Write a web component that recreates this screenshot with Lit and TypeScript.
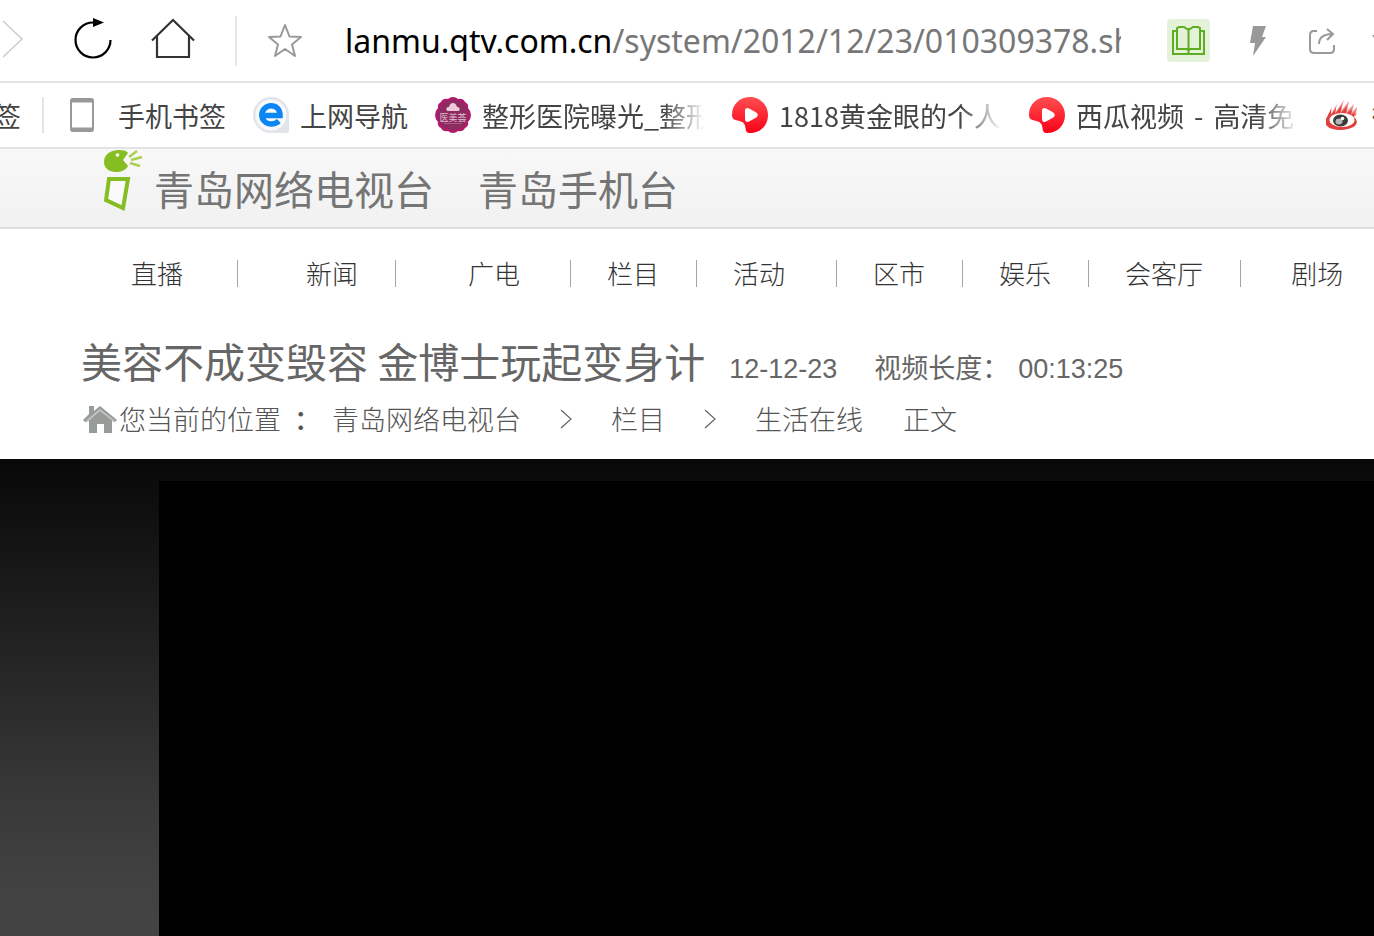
import { LitElement, html, css, svg } from "lit";
import { customElement } from "lit/decorators.js";

const melon = html`<svg class="fav" viewBox="0 0 36 36" aria-hidden="true">
  <defs><linearGradient id="m" x1="0" y1="0" x2="0" y2="1"><stop offset="0" stop-color="#ff4f50"/><stop offset="1" stop-color="#fb0018"/></linearGradient></defs>
  <path fill="url(#m)" d="M0 18C0 7 8 0 18 0s18 8 18 18-7 18-18 18c-3.500 0-4-1.500-4.500-5-.5-4-2-6-6-7C2.500 23 0 22 0 18Z"/>
  <path fill="#fff" d="M13 14c0-3 2-3.500 4.500-2.300l6 3.300c3 2 3 4 0 6l-6 3.300C15 25.500 13 25 13 22Z"/></svg>`;

const eIcon = html`<svg class="fav" viewBox="0 0 36 36" aria-hidden="true">
  <path fill="#e1e4ea" d="M18 0a18 18 0 0 1 18 18v16q0 2-2 2H18a18 18 0 0 1 0-36Z"/><circle cx="18" cy="18" r="15.500" fill="#f8f9fb"/>
  <path fill="none" stroke="#0c85f5" stroke-width="5.500" d="M9 18.500H27C27 12 23 8.800 18 8.800S8.800 13 8.800 18s4 9 9.500 9c3 0 5.500-1 7.500-3"/></svg>`;

const badge = html`<svg class="fav" viewBox="0 0 36 36" aria-hidden="true">
  <path fill="#b01a6c" d="M18 0q3 0 5 2 5-1 7 3 4 2 3 6 3 3 3 7t-3 7q1 4-3 6-2 4-7 3-2 2-5 2t-5-2q-5 1-7-3-4-2-3-6-3-3-3-7t3-7q-1-4 3-6 2-4 7-3 2-2 5-2Z"/>
  <circle cx="18" cy="18" r="15" fill="#8c2c60"/>
  <path fill="#efc9dc" d="M12 14q-2-4 2-4 1-4 4-4t4 4q4 0 2 4Z"/><path stroke="#b05a88" d="M9 26.500h18"/>
  <text x="18" y="24" text-anchor="middle" font-size="9" fill="#e3bfd0" font-family="Noto Sans CJK SC, sans-serif">医美荟</text></svg>`;

const weibo = html`<svg class="weibo" viewBox="0 0 34 30" aria-hidden="true">
  <path fill="#f0908c" d="M2 16 6 7l-1 7 6-10-2 9 9-13-3 11 8-10-2 10 7-7-2 8 5-5-1 9Z"/>
  <path fill="#e2403f" d="M1 17 5 9l0 6 5-7-1 6 7-9-2 9 7-8-1 8 6-5-1 6 4-3-1 5c5 4 3 9-3 11-7 3-19 3-24-2-3-3-2-6 0-9Z"/>
  <ellipse cx="16" cy="20" rx="12.500" ry="7" fill="#fff"/>
  <ellipse cx="14.500" cy="20.500" rx="7.500" ry="6" fill="#3a3a3a"/><ellipse cx="13" cy="21.500" rx="3.500" ry="3" fill="#b5b5b5"/><circle cx="16.500" cy="18.500" r="1.800" fill="#fff"/></svg>`;

const phone = html`<svg class="phone" viewBox="0 0 24 34" aria-hidden="true">
  <rect x="1" y="1" width="22" height="32" rx="2" fill="#fff" stroke="#999" stroke-width="2"/><path stroke="#999" stroke-width="4" d="M1 2.500h22M1 31.500h22"/></svg>`;

const bookmarks = [
  { cls: "", icon: phone, text: "手机书签" },
  { cls: "", icon: eIcon, text: "上网导航" },
  { cls: "fade", icon: badge, text: "整形医院曝光_整形" },
  { cls: "fade", icon: melon, text: "1818黄金眼的个人" },
  { cls: "fade", icon: melon, text: html`西瓜视频<span class="dash">-</span>高清免` },
  { cls: "", icon: weibo, text: "微博" },
];

const channels = [
  ["直播", "wide"], ["新闻", "tail"], ["广电", "lead"], ["栏目", ""], ["活动", "far"],
  ["区市", ""], ["娱乐", ""], ["会客厅", ""], ["剧场", "last"],
];

@customElement("app-root")
export class AppRoot extends LitElement {
  static styles = css`
    :host { display: flex; flex-direction: column; min-height: 100vh; overflow: hidden; background: #fff; font-family: "Liberation Sans", "Noto Sans CJK SC", sans-serif; color: #666; }
    * { box-sizing: border-box; }
    a { color: inherit; text-decoration: none; }
    button { border: 0; padding: 0; margin: 0; background: none; display: flex; flex: none; }
    svg { display: block; flex: none; }

    .toolbar { display: flex; align-items: center; height: 83px; border-bottom: 2px solid #e3e3e3; }
    .forward { width: 24px; }
    .forward, .reload, .home { padding-bottom: 3px; }
    .reload { margin-left: 50px; }
    .home { margin-left: 39px; }
    .rule { width: 2px; height: 50px; background: #e6e6e6; margin: 0 30px 0 40px; flex: none; }
    .address { flex: 1; min-width: 0; margin-left: 42px; font: 32px/48px "Noto Sans", "Noto Sans CJK SC", sans-serif; color: #777; white-space: nowrap; overflow: hidden; }
    .address b { font-weight: 400; color: #000; }
    .tools { display: flex; align-items: center; flex: none; margin-left: 46px; }
    .reader { background: #e5f2da; border-radius: 4px; }
    .bolt { margin-left: 39px; }
    .share { margin-left: 41px; }
    .more { margin-left: 36px; }

    .bookmarks { display: flex; align-items: center; height: 66px; border-bottom: 2px solid #e3e3e3; font: 27px/40px "Noto Sans CJK SC", sans-serif; color: #444; white-space: nowrap; overflow: hidden; }
    .cut { width: 21px; display: flex; justify-content: flex-end; flex: none; }
    .mini { width: 2px; height: 36px; background: #e3e3e3; margin: 0 26px 0 21px; flex: none; }
    .bm { display: flex; align-items: center; flex: none; margin-right: 27px; }
    .fav { width: 36px; height: 36px; margin-right: 11px; }
    .phone { width: 24px; height: 34px; margin-right: 24px; }
    .weibo { width: 34px; height: 30px; margin-right: 12px; }
    .cut, .label { padding-top: 2px; }
    .fade .label { width: 223px; -webkit-mask-image: linear-gradient(90deg, #000 182px, transparent 223px); mask-image: linear-gradient(90deg, #000 182px, transparent 223px); }
    .dash { margin: 0 10px; }

    .masthead { display: flex; align-items: flex-start; height: 80px; padding-left: 102px; border-bottom: 2px solid #dfdfdf; background: linear-gradient(#f8f8f8, #f1f1f1); font: 40px/60px "Noto Sans CJK SC", sans-serif; color: #757575; }
    .masthead a { margin-top: 9px; }
    .brand { margin-left: 10px; }
    .mobile { margin-left: 44px; }

    .channels { display: flex; align-items: center; padding-left: 131px; height: 88px; font: 300 26px/36px "Noto Sans CJK SC", sans-serif; color: #333; white-space: nowrap; }
    .channels a { flex: none; }
    .channels i { width: 1px; height: 27px; background: #a5a5a5; margin: 0 36px 0 37px; flex: none; }
    .channels .wide + i { margin: 0 68px 0 54px; }
    .channels .lead + i { margin-left: 50px; }
    .channels .tail + i { margin-right: 72px; }
    .channels .far + i { margin-left: 51px; }
    .channels i.before-last { margin-right: 50px; }

    .title { display: flex; align-items: baseline; padding-left: 81px; margin-top: 13px; white-space: nowrap; }
    h1 { margin: 0; font: 41px/60px "Noto Sans CJK SC", sans-serif; color: #666; }
    .date { margin-left: 24px; font-size: 27px; line-height: 36px; }
    .length { margin-left: 37px; font-size: 27px; line-height: 36px; }
    .time { margin-left: 9px; }
    .crumbs { display: flex; align-items: center; height: 52px; padding-left: 83px; margin-top: 3px; font: 300 27px/36px "Noto Sans CJK SC", sans-serif; color: #555; white-space: nowrap; }
    .colon { width: 51px; padding-left: 13px; font-weight: 500; }
    .chev { margin: 0 39px; }
    .here { margin-left: 40px; }

    .stage { flex: 1; display: flex; min-height: 477px; padding: 22px 0 0 159px; margin-top: 14px; background: linear-gradient(#080808, #0c0c0c 6%, #393939 72%, #424242 90%, #434343); }
    .player { flex: 1; background: #000; }
  `;

  render() {
    return html`
      <header class="toolbar">
        <button class="forward" aria-label="前进"><svg width="24" height="40" viewBox="0 0 24 40"><path d="M3 2 22 20 3 38" fill="none" stroke="#ccc" stroke-width="1.500"/></svg></button>
        <button class="reload" aria-label="刷新"><svg width="38" height="42" viewBox="0 0 38 42"><path d="M36.500 22A17.500 17.500 0 1 1 19 4.500" fill="none" stroke="#000" stroke-width="2.200"/><path d="M19 0v9l11-4.500Z"/></svg></button>
        <button class="home" aria-label="主页"><svg width="44" height="42" viewBox="0 0 44 42"><path d="M1 22.500 22 2l21 20.500M6 18v21h32V18" fill="none" stroke="#333" stroke-width="2.200"/></svg></button>
        <span class="rule"></span>
        <button aria-label="收藏"><svg width="36" height="36" viewBox="0 0 36 36"><path d="m18 2 4.500 11.500L34 14l-9 7.500L28 33l-10-7-10 7 3-11.500L2 14l11.500-.5Z" fill="none" stroke="#999" stroke-width="2" stroke-linejoin="round"/></svg></button>
        <div class="address"><b>lanmu.qtv.com.cn</b>/system/2012/12/23/010309378.sh</div>
        <div class="tools">
          <button class="reader" aria-label="阅读模式"><svg width="43" height="43" viewBox="0 0 43 43"><path d="M9 12H6v23h31V12h-3M10 9v21h10l1.500 2 1.500-2h10V9l-2-1h-5l-3 2h-3l-3-2h-5ZM21.500 10v25" fill="none" stroke="#5fae1f" stroke-width="2"/></svg></button>
          <button class="bolt" aria-label="加速"><svg width="18" height="30" viewBox="0 0 18 30"><path d="M4 0h13l-4 11h4L4 30l2-13H1Z" fill="#999"/></svg></button>
          <button class="share" aria-label="分享"><svg width="28" height="28" viewBox="0 0 28 28"><path d="M9 4H6Q2 4 2 8v14q0 4 4 4h16q4 0 4-4v-4M11 17q0-10 14-10M19 2l6 5-6 6" fill="none" stroke="#999" stroke-width="2"/></svg></button>
          <svg class="more" width="2" height="12" viewBox="0 0 2 12"><path d="M0 0h2v3Z" fill="#999"/></svg>
        </div>
      </header>
      <nav class="bookmarks">
        <span class="cut">签</span><span class="mini"></span>
        ${bookmarks.map((b) => html`<a href="#" class="bm ${b.cls}">${b.icon}<span class="label">${b.text}</span></a>`)}
      </nav>
      <div class="masthead">
        <svg width="42" height="64" viewBox="0 0 42 64" aria-hidden="true"><path fill="#86bd22" d="M2 13C2 5 9 1 17 1c5 0 8 1 9 3l-5 7 5 6c-2 4-7 6-12 6C7 23 2 19 2 13Z"/><circle cx="15.500" cy="6" r="1.800" fill="#fff"/><path d="M27 8l8-6M29 11l11-3M28 14l10 3" stroke="#a9d052" stroke-width="2.500"/><path d="M7 30h19l-5 29-17-8Z" fill="#fafafa" stroke="#86bd22" stroke-width="4"/></svg>
        <a href="#" class="brand">青岛网络电视台</a><a href="#" class="mobile">青岛手机台</a>
      </div>
      <nav class="channels">
        ${channels.map(([name, cls], i) => html`<a href="#" class=${cls}>${name}</a>${i < channels.length - 1 ? html`<i class=${i === channels.length - 2 ? "before-last" : ""}></i>` : ""}`)}
      </nav>
      <div class="title"><h1>美容不成变毁容 金博士玩起变身计</h1><span class="date">12-12-23</span><span class="length">视频长度：<span class="time">00:13:25</span></span></div>
      <nav class="crumbs">
        <svg width="36" height="27" viewBox="0 0 36 27" aria-hidden="true"><path d="M6 0h5v5l6-5 17 14-2 2-3-1v12h-8v-9h-7v9H6V15l-4 1-2-2 6-6Z" fill="#979c99"/><path d="M4 15 17 4l14 11" fill="none" stroke="#c8ccca" stroke-width="1.500"/></svg>
        <span>您当前的位置</span><span class="colon">：</span><a href="#">青岛网络电视台</a>
        ${this.chevron()}<a href="#">栏目</a>${this.chevron()}<a href="#">生活在线</a><span class="here">正文</span>
      </nav>
      <main class="stage"><div class="player"></div></main>
    `;
  }

  private chevron() {
    return html`<svg class="chev" width="12" height="20" viewBox="0 0 12 20" aria-hidden="true">${svg`<path d="m1 1 10 9L1 19" fill="none" stroke="#666" stroke-width="1.200"/>`}</svg>`;
  }
}
